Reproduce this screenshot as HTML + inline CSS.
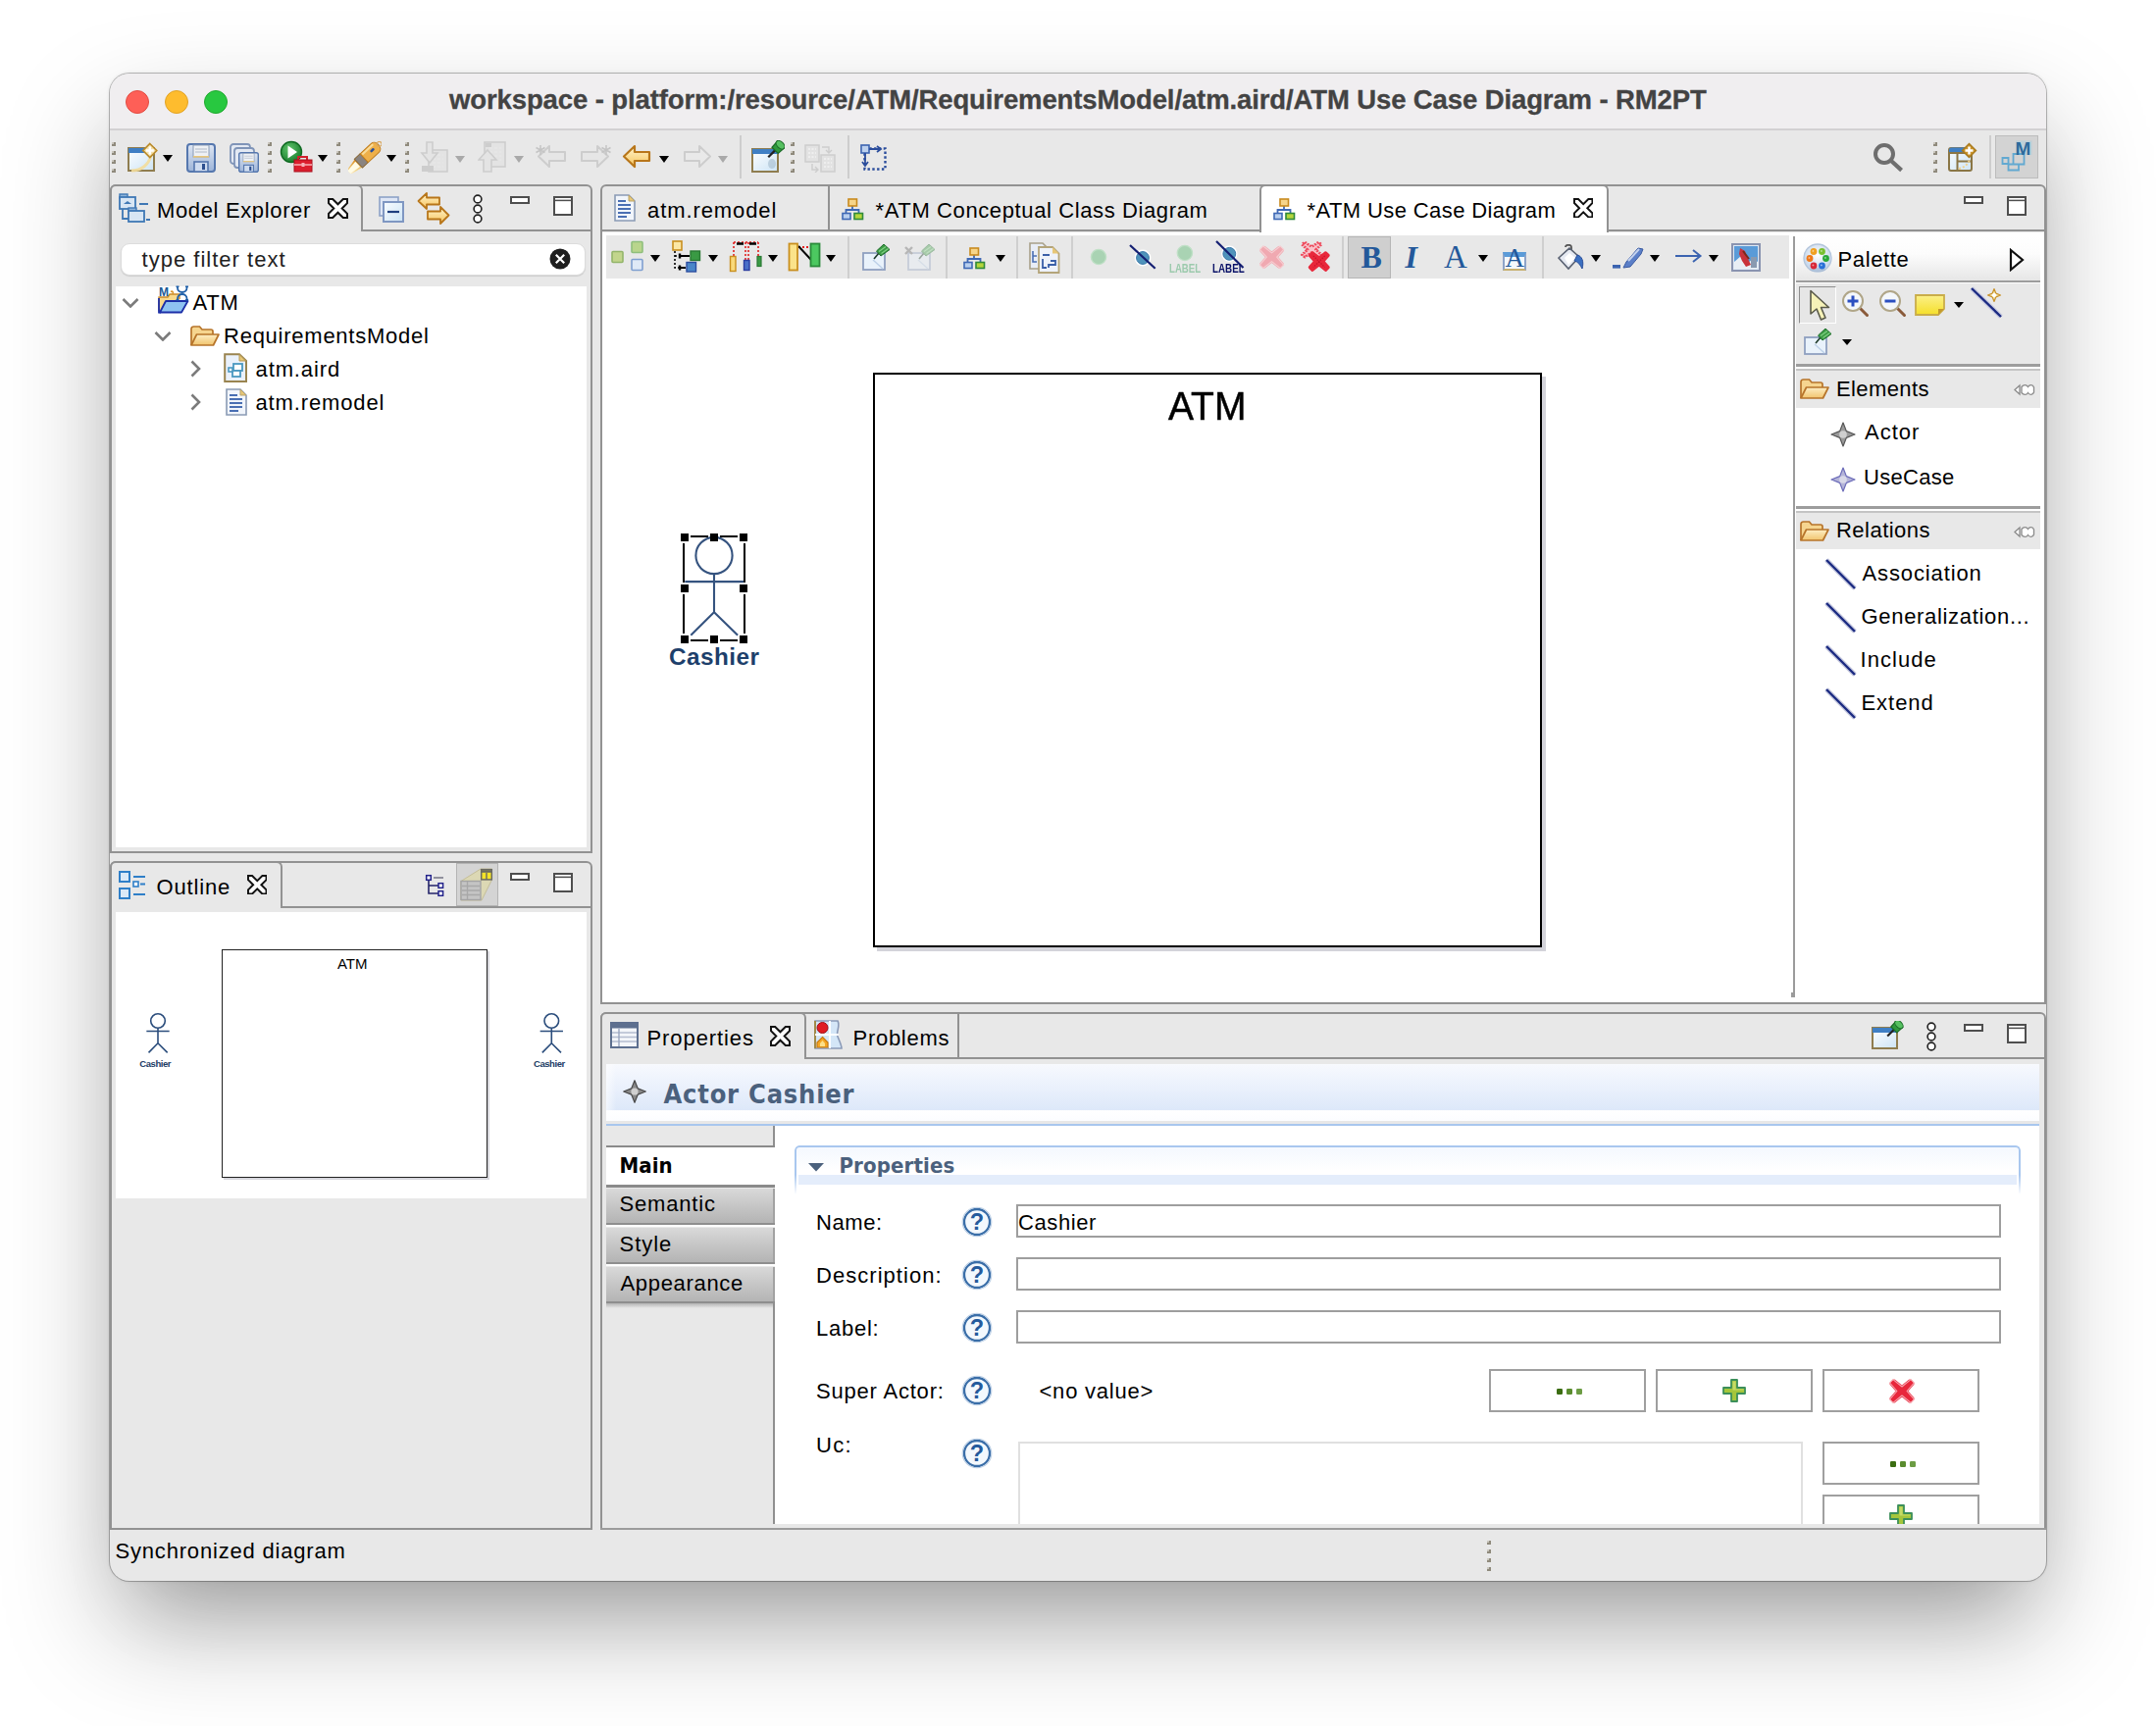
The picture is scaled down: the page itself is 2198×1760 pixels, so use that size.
<!DOCTYPE html>
<html><head><meta charset="utf-8"><title>RM2PT</title>
<style>
html,body{margin:0;padding:0;}
body{width:2198px;height:1760px;position:relative;overflow:hidden;background:#fff;font-family:"Liberation Sans",sans-serif;}
body div, body svg, body span.t{position:absolute;box-sizing:border-box;}
span.t{white-space:pre;}

</style></head><body>
<div style="left:112px;top:75px;width:1974px;height:1537px;background:#e8e8e8;border-radius:20px;box-shadow:0 0 0 1px rgba(0,0,0,0.25),0 50px 110px rgba(0,0,0,0.27),0 50px 80px -40px rgba(0,0,0,0.2),0 0 4px rgba(0,0,0,0.1);"></div>
<div style="left:112px;top:75px;width:1974px;height:58px;background:#f0eef0;border-radius:20px 20px 0 0;border-bottom:2px solid #d2d0d2;"></div>
<div style="left:128px;top:92px;width:24px;height:24px;background:#fe5f57;border-radius:50%;border:1px solid #e24b41;"></div>
<div style="left:168px;top:92px;width:24px;height:24px;background:#febc2e;border-radius:50%;border:1px solid #e1a325;"></div>
<div style="left:208px;top:92px;width:24px;height:24px;background:#28c840;border-radius:50%;border:1px solid #1fa92e;"></div>
<span class="t" style="left:458.00px;top:88px;font:700 27.5px/1 'Liberation Sans', sans-serif;color:#434343;letter-spacing:-0.112px;-webkit-text-stroke:0.3px #434343;">workspace - platform:/resource/ATM/RequirementsModel/atm.aird/ATM Use Case Diagram - RM2PT</span>
<div style="left:112px;top:188px;width:492px;height:682px;border:2px solid #929292;border-radius:6px 6px 0 0;background:#e8e8e8;"></div>
<div style="left:368px;top:234px;width:234px;height:2px;background:#929292"></div>
<div style="left:112px;top:188px;width:258px;height:48px;border:2px solid #929292;border-bottom:none;border-radius:6px 6px 0 0;background:#e8e8e8;"></div>
<div style="left:123px;top:247.5px;width:474px;height:33px;background:#fff;border-radius:9px;border:1px solid #dcdcdc;box-shadow:0 1px 1px rgba(0,0,0,0.12);"></div>
<div style="left:118px;top:292px;width:480px;height:572px;background:#fff;"></div>
<div style="left:112px;top:878px;width:492px;height:682px;border:2px solid #929292;border-radius:6px 6px 0 0;background:#e8e8e8;"></div>
<div style="left:286px;top:924px;width:316px;height:2px;background:#929292"></div>
<div style="left:112px;top:878px;width:176px;height:48px;border:2px solid #929292;border-bottom:none;border-radius:6px 6px 0 0;background:#e8e8e8;"></div>
<div style="left:118px;top:930px;width:480px;height:292px;background:#fff;"></div>
<div style="left:612px;top:188px;width:1474px;height:836px;border:2px solid #929292;border-radius:6px 6px 0 0;background:#e8e8e8;"></div>
<div style="left:614px;top:237px;width:1470px;height:785px;background:#fff;"></div>
<div style="left:614px;top:234px;width:671px;height:2px;background:#929292"></div>
<div style="left:1638px;top:234px;width:446px;height:2px;background:#929292"></div>
<div style="left:844px;top:190px;width:2px;height:44px;background:#929292"></div>
<div style="left:1284px;top:188px;width:356px;height:49px;border:2px solid #929292;border-bottom:none;border-radius:6px 6px 0 0;background:#fff;"></div>
<div style="left:612px;top:1032px;width:1474px;height:528px;border:2px solid #929292;border-radius:6px 6px 0 0;background:#e8e8e8;"></div>
<div style="left:820px;top:1078px;width:1264px;height:2px;background:#929292"></div>
<div style="left:612px;top:1032px;width:210px;height:48px;border:2px solid #929292;border-bottom:none;border-radius:6px 6px 0 0;background:#e8e8e8;"></div>
<div style="left:976px;top:1034px;width:2px;height:44px;background:#929292"></div>
<div style="left:618px;top:240px;width:1206px;height:43.6px;background:#e8e8e8;"></div>
<div style="left:1828px;top:241px;width:2px;height:776px;background:#9b9b9b"></div>
<div style="left:1826px;top:1012px;width:3px;height:5px;background:#9b9b9b;"></div>
<div style="left:1831px;top:241px;width:249px;height:45px;background:linear-gradient(180deg,#fff 0%,#fcfcfc 40%,#e6e6e6 100%);"></div>
<div style="left:1831px;top:286px;width:249px;height:2px;background:#9d9d9d"></div>
<div style="left:1831px;top:289px;width:249px;height:82px;background:#e8e8e8;"></div>
<div style="left:1831px;top:371px;width:249px;height:2.6px;background:#9d9d9d"></div>
<div style="left:1831px;top:376px;width:249px;height:2px;background:#c4c4c4"></div>
<div style="left:1831px;top:378px;width:249px;height:38px;background:#e8e8e8;"></div>
<div style="left:1831px;top:516px;width:249px;height:2.6px;background:#9d9d9d"></div>
<div style="left:1831px;top:521px;width:249px;height:2px;background:#c4c4c4"></div>
<div style="left:1831px;top:523px;width:249px;height:37px;background:#e8e8e8;"></div>
<div style="left:1834px;top:292px;width:38px;height:37.6px;border:1.6px solid #8e8e8e;border-right-color:#fff;border-bottom-color:#fff;background:#e6e6e6;"></div>
<div style="left:894px;top:384px;width:682px;height:586px;background:#d3d3da;"></div>
<div style="left:890px;top:380px;width:682px;height:586px;background:#fff;border:2px solid #000;"></div>
<span class="t" style="left:1191.00px;top:393px;font:400 41.5px/1 'Liberation Sans', sans-serif;color:#000;transform:scaleX(0.9396);transform-origin:0 0;-webkit-text-stroke:0.5px #000;">ATM</span>
<svg style="left:690px;top:540px;" width="76" height="120" viewBox="0 0 76 120"><path d="M14 7H32M14 113H32M44 7H62M44 113H62M7 14V54M69 14V54M7 66V106M69 66V106" stroke="#000" stroke-width="2" fill="none"/><g fill="none" stroke="#35537f" stroke-width="2.1"><circle cx="38" cy="26.5" r="18.6"/><path d="M38 45V84.8M8.3 53.1H68.1M38 84.2L14.3 107.8M38 84.2L62.1 107.8"/></g><rect x="4" y="4" width="8" height="8" fill="#000"/><rect x="4" y="56" width="8" height="8" fill="#000"/><rect x="4" y="108" width="8" height="8" fill="#000"/><rect x="34" y="4" width="8" height="8" fill="#000"/><rect x="34" y="108" width="8" height="8" fill="#000"/><rect x="64" y="4" width="8" height="8" fill="#000"/><rect x="64" y="56" width="8" height="8" fill="#000"/><rect x="64" y="108" width="8" height="8" fill="#000"/></svg>
<span class="t" style="left:682.00px;top:658px;font:700 24.3px/1 'Liberation Sans', sans-serif;color:#1d3f6b;letter-spacing:0.454px;">Cashier</span>
<div style="left:228px;top:970px;width:271px;height:233px;background:#d6d6dc;"></div>
<div style="left:226px;top:968px;width:271px;height:233px;background:#fff;border:1px solid #222;"></div>
<span class="t" style="left:344.00px;top:975px;font:400 15px/1 'Liberation Sans', sans-serif;color:#000;letter-spacing:-0.027px;">ATM</span>
<svg style="left:140px;top:1025px;" width="50" height="55" viewBox="0 0 50 55"><g fill="none" stroke="#2b4d7c" stroke-width="1.6" stroke-linecap="butt"><circle cx="21" cy="16.005000000000003" r="7.3075"/><path d="M21 23.3125V38.915000000000006M9.3475 26.4725H32.6525M21 38.7175L11.52 48.395M21 38.7175L30.677500000000002 48.395"/></g></svg>
<svg style="left:541px;top:1025px;" width="50" height="55" viewBox="0 0 50 55"><g fill="none" stroke="#2b4d7c" stroke-width="1.6" stroke-linecap="butt"><circle cx="21.3" cy="16.005000000000003" r="7.3075"/><path d="M21.3 23.3125V38.915000000000006M9.6475 26.4725H32.9525M21.3 38.7175L11.82 48.395M21.3 38.7175L30.9775 48.395"/></g></svg>
<span class="t" style="left:142.30px;top:1080px;font:700 9.5px/1 'Liberation Sans', sans-serif;color:#1d3d66;letter-spacing:-0.442px;">Cashier</span>
<span class="t" style="left:544.00px;top:1080px;font:700 9.5px/1 'Liberation Sans', sans-serif;color:#1d3d66;letter-spacing:-0.442px;">Cashier</span>
<div style="left:618px;top:1085px;width:1461px;height:58px;background:linear-gradient(180deg,#f7f9fe 0%,#e9f0fc 45%,#dde8f9 81%,#fff 82%,#fcfdff 100%);"></div>
<div style="left:618px;top:1085px;width:10px;height:58px;background:linear-gradient(90deg,rgba(255,255,255,.6),rgba(255,255,255,0));"></div>
<div style="left:618px;top:1146px;width:1461px;height:2px;background:#a8c6ee"></div>
<span class="t" style="left:676.50px;top:1102px;font:700 27px/1 'DejaVu Sans Condensed', 'DejaVu Sans', sans-serif;color:#4b617d;letter-spacing:0.775px;">Actor Cashier</span>
<div style="left:618px;top:1148px;width:1461px;height:406px;background:#fff;"></div>
<div style="left:618px;top:1148px;width:172px;height:406px;background:#e8e8e8;"></div>
<div style="left:788px;top:1148px;width:2px;height:20px;background:#8f8f8f"></div>
<div style="left:618px;top:1167.6px;width:172px;height:2.4px;background:#8a8a8a"></div>
<div style="left:618px;top:1170px;width:172px;height:38px;background:#fff;"></div>
<div style="left:618px;top:1208px;width:172px;height:2.6px;background:#8a8a8a"></div>
<span class="t" style="left:631.50px;top:1178px;font:700 22px/1 'DejaVu Sans Condensed', 'DejaVu Sans', sans-serif;color:#000;letter-spacing:0.056px;">Main</span>
<div style="left:618px;top:1212px;width:172px;height:35px;background:linear-gradient(180deg,#d9d9d9 0%,#c6c6c6 50%,#b4b4b4 100%);border-right:2px solid #a2a2a2;"></div>
<div style="left:618px;top:1247px;width:172px;height:2px;background:#8e8e8e"></div>
<div style="left:618px;top:1249px;width:172px;height:2px;background:#fdfdfd"></div>
<span class="t" style="left:631.50px;top:1217px;font:400 22px/1 'Liberation Sans', sans-serif;color:#000;letter-spacing:0.828px;">Semantic</span>
<div style="left:618px;top:1252px;width:172px;height:35px;background:linear-gradient(180deg,#d9d9d9 0%,#c6c6c6 50%,#b4b4b4 100%);border-right:2px solid #a2a2a2;"></div>
<div style="left:618px;top:1287px;width:172px;height:2px;background:#8e8e8e"></div>
<div style="left:618px;top:1289px;width:172px;height:2px;background:#fdfdfd"></div>
<span class="t" style="left:631.50px;top:1258px;font:400 22px/1 'Liberation Sans', sans-serif;color:#000;letter-spacing:0.957px;">Style</span>
<div style="left:618px;top:1292px;width:172px;height:35px;background:linear-gradient(180deg,#d9d9d9 0%,#c6c6c6 50%,#b4b4b4 100%);border-right:2px solid #a2a2a2;"></div>
<div style="left:618px;top:1327px;width:172px;height:2px;background:#8e8e8e"></div>
<div style="left:618px;top:1329px;width:170px;height:5px;background:linear-gradient(180deg,#b4b4b4,#e8e8e8);"></div>
<span class="t" style="left:632.50px;top:1298px;font:400 22px/1 'Liberation Sans', sans-serif;color:#000;letter-spacing:0.676px;">Appearance</span>
<div style="left:788px;top:1329px;width:2px;height:225px;background:#8f8f8f"></div>
<div style="left:810px;top:1168px;width:1250px;height:50px;border:2px solid #a9c7ef;border-bottom:none;border-radius:5px 5px 0 0;background:linear-gradient(180deg,#f4f8fe 0%,#fff 50%,#fff 100%);-webkit-mask-image:linear-gradient(180deg,#000 60%,transparent 100%);"></div>
<div style="left:814px;top:1197.5px;width:1242px;height:10px;background:#e4edfb;"></div>
<svg style="left:824px;top:1185.8px;" width="16" height="9" viewBox="0 0 16 9"><path d="M0 0H16L8 8.6Z" fill="#4b617d"/></svg>
<span class="t" style="left:855.50px;top:1178px;font:700 22px/1 'DejaVu Sans Condensed', 'DejaVu Sans', sans-serif;color:#4b617d;letter-spacing:0.123px;">Properties</span>
<span class="t" style="left:832.00px;top:1236px;font:400 22px/1 'Liberation Sans', sans-serif;color:#000;letter-spacing:0.579px;">Name:</span>
<svg style="left:979.5px;top:1230px;" width="32" height="32" viewBox="0 0 32 32"><circle cx="16" cy="16" r="13" fill="#f3f8fd" stroke="#3a6ea8" stroke-width="2.3"/><circle cx="16" cy="16" r="14.8" fill="none" stroke="#b9cde4" stroke-width="1.1"/><text x="16" y="24.4" text-anchor="middle" font-family="Liberation Sans, sans-serif" font-weight="700" font-size="23.5" fill="#245a9c">?</text></svg>
<div style="left:1036px;top:1228px;width:1004px;height:34px;background:#fff;border:2px solid #9e9e9e;"></div>
<span class="t" style="left:832.00px;top:1290px;font:400 22px/1 'Liberation Sans', sans-serif;color:#000;letter-spacing:1.042px;">Description:</span>
<svg style="left:979.5px;top:1284px;" width="32" height="32" viewBox="0 0 32 32"><circle cx="16" cy="16" r="13" fill="#f3f8fd" stroke="#3a6ea8" stroke-width="2.3"/><circle cx="16" cy="16" r="14.8" fill="none" stroke="#b9cde4" stroke-width="1.1"/><text x="16" y="24.4" text-anchor="middle" font-family="Liberation Sans, sans-serif" font-weight="700" font-size="23.5" fill="#245a9c">?</text></svg>
<div style="left:1036px;top:1282px;width:1004px;height:34px;background:#fff;border:2px solid #9e9e9e;"></div>
<span class="t" style="left:832.00px;top:1344px;font:400 22px/1 'Liberation Sans', sans-serif;color:#000;letter-spacing:0.734px;">Label:</span>
<svg style="left:979.5px;top:1338px;" width="32" height="32" viewBox="0 0 32 32"><circle cx="16" cy="16" r="13" fill="#f3f8fd" stroke="#3a6ea8" stroke-width="2.3"/><circle cx="16" cy="16" r="14.8" fill="none" stroke="#b9cde4" stroke-width="1.1"/><text x="16" y="24.4" text-anchor="middle" font-family="Liberation Sans, sans-serif" font-weight="700" font-size="23.5" fill="#245a9c">?</text></svg>
<div style="left:1036px;top:1336px;width:1004px;height:34px;background:#fff;border:2px solid #9e9e9e;"></div>
<span class="t" style="left:1038.00px;top:1236px;font:400 22px/1 'Liberation Sans', sans-serif;color:#000;letter-spacing:0.586px;">Cashier</span>
<span class="t" style="left:832.00px;top:1408px;font:400 22px/1 'Liberation Sans', sans-serif;color:#000;letter-spacing:0.803px;">Super Actor:</span>
<svg style="left:979.5px;top:1402px;" width="32" height="32" viewBox="0 0 32 32"><circle cx="16" cy="16" r="13" fill="#f3f8fd" stroke="#3a6ea8" stroke-width="2.3"/><circle cx="16" cy="16" r="14.8" fill="none" stroke="#b9cde4" stroke-width="1.1"/><text x="16" y="24.4" text-anchor="middle" font-family="Liberation Sans, sans-serif" font-weight="700" font-size="23.5" fill="#245a9c">?</text></svg>
<span class="t" style="left:1059.50px;top:1408px;font:400 22px/1 'Liberation Sans', sans-serif;color:#000;letter-spacing:0.775px;">&lt;no value&gt;</span>
<div style="left:1518px;top:1396px;width:160px;height:44px;background:#fff;border:2px solid #9f9f9f;"></div>
<svg style="left:1583.5px;top:1416.0px;" width="32" height="6" viewBox="0 0 32 6"><rect x="3" y="0" width="6" height="6" rx="1.2" fill="#3b6d12"/><rect x="13" y="0" width="6" height="6" rx="1.2" fill="#5a8c2e"/><rect x="23" y="0" width="6" height="6" rx="1.2" fill="#6c9c44"/></svg>
<div style="left:1688px;top:1396px;width:160px;height:44px;background:#fff;border:2px solid #9f9f9f;"></div>
<svg style="left:1756.0px;top:1405.5px;" width="24" height="24" viewBox="0 0 24 24"><path d="M9 1H15V9H23V15H15V23H9V15H1V9H9Z" fill="#a5c63b" stroke="#3c8f5a" stroke-width="1.8" stroke-linejoin="round"/><path d="M10.5 2.5H13.5V10.5H21.5V11.5H10.5Z" fill="#d2e47a" opacity=".7"/></svg>
<div style="left:1858px;top:1396px;width:160px;height:44px;background:#fff;border:2px solid #9f9f9f;"></div>
<svg style="left:1926.0px;top:1405.5px;" width="26" height="25" viewBox="0 0 26 25"><path d="M5 2 L13 8.5 L21 2 L24 5 L17.5 12.5 L24 20 L21 23 L13 16.5 L5 23 L2 20 L8.5 12.5 L2 5Z" fill="#e8283c" stroke="#e8283c" stroke-width="3" stroke-linejoin="round"/><path d="M5 2 L13 8.5 L21 2 L24 5 L17.5 12.5 L24 20 L21 23 L13 16.5 L5 23 L2 20 L8.5 12.5 L2 5Z" fill="none" stroke="#f6a6ae" stroke-width="1" stroke-linejoin="round" transform="translate(13 12.5) scale(1.13) translate(-13 -12.5)"/></svg>
<span class="t" style="left:832.00px;top:1463px;font:400 22px/1 'Liberation Sans', sans-serif;color:#000;letter-spacing:1.306px;">Uc:</span>
<svg style="left:979.5px;top:1466px;" width="32" height="32" viewBox="0 0 32 32"><circle cx="16" cy="16" r="13" fill="#f3f8fd" stroke="#3a6ea8" stroke-width="2.3"/><circle cx="16" cy="16" r="14.8" fill="none" stroke="#b9cde4" stroke-width="1.1"/><text x="16" y="24.4" text-anchor="middle" font-family="Liberation Sans, sans-serif" font-weight="700" font-size="23.5" fill="#245a9c">?</text></svg>
<div style="left:1038px;top:1470px;width:800px;height:84px;background:#fff;border:2px solid #e0e0e0;border-bottom:none;"></div>
<div style="left:1858px;top:1470px;width:160px;height:44px;background:#fff;border:2px solid #9f9f9f;"></div>
<svg style="left:1923.5px;top:1490.0px;" width="32" height="6" viewBox="0 0 32 6"><rect x="3" y="0" width="6" height="6" rx="1.2" fill="#3b6d12"/><rect x="13" y="0" width="6" height="6" rx="1.2" fill="#5a8c2e"/><rect x="23" y="0" width="6" height="6" rx="1.2" fill="#6c9c44"/></svg>
<div style="left:1858px;top:1524px;width:160px;height:30px;background:#fff;border:2px solid #9f9f9f;border-bottom:none;"></div>
<svg style="left:1926.0px;top:1533.5px;" width="24" height="24" viewBox="0 0 24 24"><path d="M9 1H15V9H23V15H15V23H9V15H1V9H9Z" fill="#a5c63b" stroke="#3c8f5a" stroke-width="1.8" stroke-linejoin="round"/><path d="M10.5 2.5H13.5V10.5H21.5V11.5H10.5Z" fill="#d2e47a" opacity=".7"/></svg>
<div style="left:614px;top:1554px;width:1470px;height:4px;background:#e8e8e8;"></div>
<div style="left:612px;top:1558px;width:1474px;height:2px;background:#9b9b9b"></div>
<span class="t" style="left:160.00px;top:204px;font:400 22px/1 'Liberation Sans', sans-serif;color:#000;letter-spacing:0.644px;">Model Explorer</span>
<span class="t" style="left:144.50px;top:254px;font:400 22px/1 'Liberation Sans', sans-serif;color:#222;letter-spacing:1.019px;">type filter text</span>
<span class="t" style="left:196.50px;top:298px;font:400 22px/1 'Liberation Sans', sans-serif;color:#000;letter-spacing:0.760px;">ATM</span>
<span class="t" style="left:228.00px;top:332px;font:400 22px/1 'Liberation Sans', sans-serif;color:#000;letter-spacing:0.751px;">RequirementsModel</span>
<span class="t" style="left:260.50px;top:366px;font:400 22px/1 'Liberation Sans', sans-serif;color:#000;letter-spacing:0.895px;">atm.aird</span>
<span class="t" style="left:260.50px;top:400px;font:400 22px/1 'Liberation Sans', sans-serif;color:#000;letter-spacing:0.862px;">atm.remodel</span>
<span class="t" style="left:159.50px;top:894px;font:400 22px/1 'Liberation Sans', sans-serif;color:#000;letter-spacing:0.838px;">Outline</span>
<span class="t" style="left:660.00px;top:204px;font:400 22px/1 'Liberation Sans', sans-serif;color:#000;letter-spacing:0.912px;">atm.remodel</span>
<span class="t" style="left:892.50px;top:204px;font:400 22px/1 'Liberation Sans', sans-serif;color:#000;letter-spacing:0.613px;">*ATM Conceptual Class Diagram</span>
<span class="t" style="left:1332.50px;top:204px;font:400 22px/1 'Liberation Sans', sans-serif;color:#000;letter-spacing:0.400px;">*ATM Use Case Diagram</span>
<span class="t" style="left:1873.50px;top:254px;font:400 22px/1 'Liberation Sans', sans-serif;color:#000;letter-spacing:0.624px;">Palette</span>
<span class="t" style="left:1872.00px;top:386px;font:400 22px/1 'Liberation Sans', sans-serif;color:#000;letter-spacing:0.399px;">Elements</span>
<span class="t" style="left:1901.00px;top:430px;font:400 22px/1 'Liberation Sans', sans-serif;color:#000;letter-spacing:0.995px;">Actor</span>
<span class="t" style="left:1900.00px;top:476px;font:400 22px/1 'Liberation Sans', sans-serif;color:#000;letter-spacing:0.292px;">UseCase</span>
<span class="t" style="left:1872.00px;top:530px;font:400 22px/1 'Liberation Sans', sans-serif;color:#000;letter-spacing:0.473px;">Relations</span>
<span class="t" style="left:1898.50px;top:574px;font:400 22px/1 'Liberation Sans', sans-serif;color:#000;letter-spacing:0.873px;">Association</span>
<span class="t" style="left:1897.50px;top:618px;font:400 22px/1 'Liberation Sans', sans-serif;color:#000;letter-spacing:0.682px;">Generalization...</span>
<span class="t" style="left:1896.50px;top:662px;font:400 22px/1 'Liberation Sans', sans-serif;color:#000;letter-spacing:1.049px;">Include</span>
<span class="t" style="left:1897.50px;top:706px;font:400 22px/1 'Liberation Sans', sans-serif;color:#000;letter-spacing:0.949px;">Extend</span>
<span class="t" style="left:659.50px;top:1048px;font:400 22px/1 'Liberation Sans', sans-serif;color:#000;letter-spacing:0.915px;">Properties</span>
<span class="t" style="left:869.50px;top:1048px;font:400 22px/1 'Liberation Sans', sans-serif;color:#000;letter-spacing:0.726px;">Problems</span>
<span class="t" style="left:117.50px;top:1571px;font:400 22px/1 'Liberation Sans', sans-serif;color:#000;letter-spacing:0.812px;">Synchronized diagram</span>
<svg width="0" height="0" style="left:0;top:0"><defs><linearGradient id="gw" x1="0" y1="0" x2="1" y2="1"><stop offset="0" stop-color="#f7fbfe"/><stop offset="1" stop-color="#cfe5f5"/></linearGradient><linearGradient id="gsave" x1="0" y1="0" x2="0" y2="1"><stop offset="0" stop-color="#dfe7f3"/><stop offset="1" stop-color="#9db4d8"/></linearGradient><linearGradient id="gyel" x1="0" y1="0" x2="0" y2="1"><stop offset="0" stop-color="#fff6d0"/><stop offset="1" stop-color="#f7c35a"/></linearGradient><radialGradient id="ggreen" cx=".4" cy=".35" r=".7"><stop offset="0" stop-color="#5fc46a"/><stop offset="1" stop-color="#157a2b"/></radialGradient><linearGradient id="gpen" x1="0" y1="1" x2="1" y2="0"><stop offset="0" stop-color="#fff"/><stop offset=".35" stop-color="#f3d488"/><stop offset="1" stop-color="#d98a1c"/></linearGradient><linearGradient id="gfold" x1="0" y1="0" x2="0" y2="1"><stop offset="0" stop-color="#fdeec4"/><stop offset="1" stop-color="#f1c46d"/></linearGradient><linearGradient id="gnote" x1="0" y1="0" x2="0" y2="1"><stop offset="0" stop-color="#fbf08a"/><stop offset="1" stop-color="#f5df28"/></linearGradient><radialGradient id="gpal" cx=".5" cy=".4" r=".6"><stop offset="0" stop-color="#fff"/><stop offset="1" stop-color="#bfd2e8"/></radialGradient></defs></svg>
<svg style="left:114px;top:144.6px;" width="4" height="36" viewBox="0 0 4 36"><rect x="0" y="0" width="4" height="4" fill="#8f8a7c"/><rect x="0" y="0" width="2" height="2" fill="#c9c6bd"/><rect x="0" y="9" width="4" height="4" fill="#8f8a7c"/><rect x="0" y="9" width="2" height="2" fill="#c9c6bd"/><rect x="0" y="18" width="4" height="4" fill="#8f8a7c"/><rect x="0" y="18" width="2" height="2" fill="#c9c6bd"/><rect x="0" y="27" width="4" height="4" fill="#8f8a7c"/><rect x="0" y="27" width="2" height="2" fill="#c9c6bd"/></svg>
<svg style="left:130px;top:144px;" width="32" height="32" viewBox="0 0 32 32"><rect x="1" y="7" width="26" height="23" fill="#eaf4fb" stroke="#8f7d4f" stroke-width="2"/><rect x="1" y="7" width="26" height="5" fill="#3f7fc4"/><rect x="2" y="12" width="24" height="17" fill="url(#gw)"/><path d="M4 30 C14 30 22 24 24 14" fill="none" stroke="#f3dd9a" stroke-width="3" opacity=".9"/><path d="M22.8 2.5 L29.8 9.5 L22.8 16.5 L15.8 9.5Z" fill="#f3dfa6" stroke="#b98a2a" stroke-width="1.6"/><path d="M22.8 5.5V13.5M18.8 9.5H26.8" stroke="#fff" stroke-width="2.4"/></svg>
<svg style="left:166px;top:158px;" width="10" height="7" viewBox="0 0 10 7"><path d="M0 0H10L5.0 7Z" fill="#000"/></svg>
<svg style="left:190px;top:146px;" width="30" height="30" viewBox="0 0 30 30"><g transform="translate(0,0) scale(1.0)"><rect x="1" y="1" width="28" height="28" rx="3" fill="url(#gsave)" stroke="#5577ae" stroke-width="2"/><rect x="7" y="2" width="16" height="12" fill="#eef1f5" stroke="#8a9bb5" stroke-width="1"/><path d="M9 6H21M9 9H21" stroke="#c5cbd6" stroke-width="1.4"/><rect x="7" y="13" width="16" height="1.6" fill="#e8c77c"/><rect x="8" y="19" width="14" height="10" fill="#cfdcf0" stroke="#5577ae" stroke-width="1.6"/><rect x="16" y="21" width="3" height="6" fill="#2d4f8f"/></g></svg>
<svg style="left:234px;top:146px;" width="31" height="30" viewBox="0 0 31 30"><rect x="1" y="1" width="20" height="20" rx="3" fill="#e3e9f3" stroke="#7f94b8" stroke-width="1.8"/><rect x="5" y="5" width="20" height="20" rx="3" fill="#e3e9f3" stroke="#7f94b8" stroke-width="1.8"/><g transform="translate(9,9) scale(0.7)"><rect x="1" y="1" width="28" height="28" rx="3" fill="url(#gsave)" stroke="#5577ae" stroke-width="2"/><rect x="7" y="2" width="16" height="12" fill="#eef1f5" stroke="#8a9bb5" stroke-width="1"/><path d="M9 6H21M9 9H21" stroke="#c5cbd6" stroke-width="1.4"/><rect x="7" y="13" width="16" height="1.6" fill="#e8c77c"/><rect x="8" y="19" width="14" height="10" fill="#cfdcf0" stroke="#5577ae" stroke-width="1.6"/><rect x="16" y="21" width="3" height="6" fill="#2d4f8f"/></g></svg>
<svg style="left:273px;top:144.6px;" width="4" height="36" viewBox="0 0 4 36"><rect x="0" y="0" width="4" height="4" fill="#8f8a7c"/><rect x="0" y="0" width="2" height="2" fill="#c9c6bd"/><rect x="0" y="9" width="4" height="4" fill="#8f8a7c"/><rect x="0" y="9" width="2" height="2" fill="#c9c6bd"/><rect x="0" y="18" width="4" height="4" fill="#8f8a7c"/><rect x="0" y="18" width="2" height="2" fill="#c9c6bd"/><rect x="0" y="27" width="4" height="4" fill="#8f8a7c"/><rect x="0" y="27" width="2" height="2" fill="#c9c6bd"/></svg>
<svg style="left:285px;top:143px;" width="34" height="33" viewBox="0 0 34 33"><circle cx="12" cy="12" r="10.5" fill="url(#ggreen)" stroke="#0f6a22" stroke-width="1.4"/><path d="M8.5 5.5L18 12L8.5 18.5Z" fill="#fff"/><rect x="19" y="17" width="9" height="5" fill="none" stroke="#d0202c" stroke-width="2"/><rect x="15" y="20" width="18" height="12" fill="#dc1f2e" stroke="#a80f1c" stroke-width="1"/><path d="M15 25H33" stroke="#f7b0b5" stroke-width="1.5"/><rect x="22.5" y="23" width="3" height="4" fill="#f7b0b5"/></svg>
<svg style="left:324px;top:158px;" width="10" height="7" viewBox="0 0 10 7"><path d="M0 0H10L5.0 7Z" fill="#000"/></svg>
<svg style="left:343px;top:144.6px;" width="4" height="36" viewBox="0 0 4 36"><rect x="0" y="0" width="4" height="4" fill="#8f8a7c"/><rect x="0" y="0" width="2" height="2" fill="#c9c6bd"/><rect x="0" y="9" width="4" height="4" fill="#8f8a7c"/><rect x="0" y="9" width="2" height="2" fill="#c9c6bd"/><rect x="0" y="18" width="4" height="4" fill="#8f8a7c"/><rect x="0" y="18" width="2" height="2" fill="#c9c6bd"/><rect x="0" y="27" width="4" height="4" fill="#8f8a7c"/><rect x="0" y="27" width="2" height="2" fill="#c9c6bd"/></svg>
<svg style="left:355px;top:144px;" width="34" height="33" viewBox="0 0 34 33"><g transform="rotate(-43 17 16.5)"><path d="M-5 13.5L8 11V22L-5 19.5Z" fill="url(#gpen)"/><path d="M-5 14.5L7 13V20L-5 18.5Z" fill="#fffbe6"/><rect x="8" y="10.5" width="8" height="12" fill="#8a8480" stroke="#8a6a3a" stroke-width="1"/><path d="M16 10.5H31C34 10.5 36 13 36 16.5C36 20 34 22.5 31 22.5H16Z" fill="#eeb04a" stroke="#c07d1d" stroke-width="1"/><path d="M17 12.5H32" stroke="#f9dc9a" stroke-width="2"/><rect x="25" y="15" width="5" height="2.6" rx="1.2" fill="#2a4f9a"/><circle cx="37" cy="16.5" r="2.4" fill="none" stroke="#d9a860" stroke-width="1.2"/></g></svg>
<svg style="left:394px;top:158px;" width="10" height="7" viewBox="0 0 10 7"><path d="M0 0H10L5.0 7Z" fill="#000"/></svg>
<svg style="left:413px;top:144.6px;" width="4" height="36" viewBox="0 0 4 36"><rect x="0" y="0" width="4" height="4" fill="#8f8a7c"/><rect x="0" y="0" width="2" height="2" fill="#c9c6bd"/><rect x="0" y="9" width="4" height="4" fill="#8f8a7c"/><rect x="0" y="9" width="2" height="2" fill="#c9c6bd"/><rect x="0" y="18" width="4" height="4" fill="#8f8a7c"/><rect x="0" y="18" width="2" height="2" fill="#c9c6bd"/><rect x="0" y="27" width="4" height="4" fill="#8f8a7c"/><rect x="0" y="27" width="2" height="2" fill="#c9c6bd"/></svg>
<svg style="left:428px;top:144px;" width="29" height="32" viewBox="0 0 29 32"><rect x="9" y="9" width="19" height="22" fill="#e3e3e3" stroke="#cdcdcd" stroke-width="1.6"/><path d="M13 14H24M13 18H24M13 22H24M13 26H24" stroke="#e8e8e8" stroke-width="1.6" stroke-dasharray="3 2"/><path d="M7 1H13V12H18L10 22L2 12H7Z" fill="#e4e4e4" stroke="#cdcdcd" stroke-width="1.6"/><rect x="2" y="25" width="12" height="6" fill="#cdcdcd"/></svg>
<svg style="left:464px;top:159px;" width="10" height="7" viewBox="0 0 10 7"><path d="M0 0H10L5.0 7Z" fill="#a9a9a9"/></svg>
<svg style="left:487px;top:144px;" width="30" height="32" viewBox="0 0 30 32"><rect x="7" y="1" width="21" height="25" fill="#e3e3e3" stroke="#cdcdcd" stroke-width="1.6"/><path d="M12 7H24M12 11H24M12 15H24M12 19H24" stroke="#e8e8e8" stroke-width="1.6" stroke-dasharray="3 2"/><rect x="8" y="2" width="6" height="4" fill="#cdcdcd"/><path d="M10 9L19 19H14V31H6V19H1Z" fill="#e4e4e4" stroke="#cdcdcd" stroke-width="1.6"/></svg>
<svg style="left:524px;top:159px;" width="10" height="7" viewBox="0 0 10 7"><path d="M0 0H10L5.0 7Z" fill="#a9a9a9"/></svg>
<svg style="left:546px;top:147px;" width="33" height="26" viewBox="0 0 33 26"><path d="M14 2L3 12.5L14 23V17H30V8H14Z" fill="#e6e6e6" stroke="#cdcdcd" stroke-width="2" stroke-linejoin="round"/><path d="M5 1V11M0.5 3.5L9.5 8.5M9.5 3.5L0.5 8.5" stroke="#c4c4c4" stroke-width="1.5"/></svg>
<svg style="left:590px;top:147px;" width="33" height="26" viewBox="0 0 33 26"><path d="M19 2L30 12.5L19 23V17H3V8H19Z" fill="#e6e6e6" stroke="#cdcdcd" stroke-width="2" stroke-linejoin="round"/><path d="M28 1V11M23.5 3.5L32.5 8.5M32.5 3.5L23.5 8.5" stroke="#c4c4c4" stroke-width="1.5"/></svg>
<svg style="left:634px;top:147px;" width="31" height="26" viewBox="0 0 31 26"><path d="M13 2L2 12.5L13 23V17H28V8H13Z" fill="url(#gyel)" stroke="#b8761a" stroke-width="2.2" stroke-linejoin="round"/></svg>
<svg style="left:672px;top:159px;" width="10" height="7" viewBox="0 0 10 7"><path d="M0 0H10L5.0 7Z" fill="#000"/></svg>
<svg style="left:695px;top:147px;" width="31" height="26" viewBox="0 0 31 26"><path d="M18 2L29 12.5L18 23V17H3V8H18Z" fill="#e9e9e9" stroke="#cdcdcd" stroke-width="2" stroke-linejoin="round"/></svg>
<svg style="left:732px;top:159px;" width="10" height="7" viewBox="0 0 10 7"><path d="M0 0H10L5.0 7Z" fill="#a9a9a9"/></svg>
<div style="left:754px;top:138px;width:2px;height:44px;background:#cdcdcd;"></div>
<svg style="left:766px;top:143px;" width="34" height="33" viewBox="0 0 34 33"><rect x="1" y="9" width="26" height="23" fill="#eaf4fb" stroke="#8f7d4f" stroke-width="2"/><rect x="1" y="9" width="26" height="5" fill="#3f7fc4"/><rect x="2" y="14" width="24" height="17" fill="url(#gw)"/><ellipse cx="21" cy="24" rx="4" ry="5" fill="#9fb7c9" opacity=".55"/><g transform="translate(16,1) scale(1.25)"><path d="M6.5 7.5L1 13" stroke="#222" stroke-width="1.8"/><path d="M4 5L9 10L14 5.5L8.5 0Z" fill="#2f9a3d" stroke="#1c6b28" stroke-width="1"/><ellipse cx="10.8" cy="3" rx="4.2" ry="2.6" transform="rotate(45 10.8 3)" fill="#55c060" stroke="#1c6b28" stroke-width=".8"/></g></svg>
<svg style="left:806px;top:144.6px;" width="4" height="36" viewBox="0 0 4 36"><rect x="0" y="0" width="4" height="4" fill="#8f8a7c"/><rect x="0" y="0" width="2" height="2" fill="#c9c6bd"/><rect x="0" y="9" width="4" height="4" fill="#8f8a7c"/><rect x="0" y="9" width="2" height="2" fill="#c9c6bd"/><rect x="0" y="18" width="4" height="4" fill="#8f8a7c"/><rect x="0" y="18" width="2" height="2" fill="#c9c6bd"/><rect x="0" y="27" width="4" height="4" fill="#8f8a7c"/><rect x="0" y="27" width="2" height="2" fill="#c9c6bd"/></svg>
<svg style="left:820px;top:147px;" width="32" height="29" viewBox="0 0 32 29"><rect x="1" y="1" width="14" height="17" fill="#e2e2e2" stroke="#cdcdcd" stroke-width="1.5"/><rect x="17" y="11" width="14" height="17" fill="#e2e2e2" stroke="#cdcdcd" stroke-width="1.5"/><path d="M4 5H12M4 9H12M4 13H12M20 15H28M20 19H28M20 23H28" stroke="#f2f2f2" stroke-width="1.6" stroke-dasharray="2 1.5"/><path d="M18 3H25V9M22 6L25 9L28 6M8 20V26H14M11 23L14 26L11 29" fill="none" stroke="#cdcdcd" stroke-width="1.4"/></svg>
<div style="left:864px;top:138px;width:2px;height:44px;background:#cdcdcd;"></div>
<svg style="left:877px;top:147px;" width="28" height="28" viewBox="0 0 28 28"><rect x="4.5" y="4.5" width="21" height="21" fill="none" stroke="#2b4d9c" stroke-width="2.4" stroke-dasharray="2.4 2.4"/><rect x="1" y="1" width="8" height="8" fill="#bcd0ee" stroke="#3b63b0" stroke-width="1.6"/><path d="M9 5H21M17 2L21 5L17 8M5 9V22M2 18L5 22L8 18" fill="none" stroke="#2b4d9c" stroke-width="1.8"/></svg>
<svg style="left:1909px;top:145px;" width="32" height="32" viewBox="0 0 32 32"><circle cx="12" cy="12" r="9" fill="none" stroke="#6e6e6e" stroke-width="4"/><path d="M18.5 18.5L29.6 28.6" stroke="#6e6e6e" stroke-width="4.2" stroke-linecap="butt"/></svg>
<svg style="left:1971px;top:144.6px;" width="4" height="36" viewBox="0 0 4 36"><rect x="0" y="0" width="4" height="4" fill="#8f8a7c"/><rect x="0" y="0" width="2" height="2" fill="#c9c6bd"/><rect x="0" y="9" width="4" height="4" fill="#8f8a7c"/><rect x="0" y="9" width="2" height="2" fill="#c9c6bd"/><rect x="0" y="18" width="4" height="4" fill="#8f8a7c"/><rect x="0" y="18" width="2" height="2" fill="#c9c6bd"/><rect x="0" y="27" width="4" height="4" fill="#8f8a7c"/><rect x="0" y="27" width="2" height="2" fill="#c9c6bd"/></svg>
<svg style="left:1985px;top:144px;" width="32" height="32" viewBox="0 0 32 32"><rect x="2" y="7" width="23" height="23" rx="2" fill="url(#gw)" stroke="#8a7646" stroke-width="2"/><path d="M2 12V9C2 7.5 3 6.5 4.5 6.5H22.5C24 6.5 25 7.5 25 9V12Z" fill="#3f7fc4"/><path d="M10.5 12V30M10.5 20.5H25M2 12H25" stroke="#8a7646" stroke-width="2"/><path d="M12 28C17 27 21 24 23 19" fill="none" stroke="#f1d08a" stroke-width="2" stroke-dasharray="2 2"/><path d="M22.5 2.5 L29.5 9.5 L22.5 16.5 L15.5 9.5Z" fill="#c9932a" stroke="#a87a1e" stroke-width="1.4"/><path d="M22.5 5.5V13.5M18.5 9.5H26.5" stroke="#fff" stroke-width="2.4"/></svg>
<div style="left:2028px;top:138px;width:2px;height:44px;background:#cdcdcd;"></div>
<div style="left:2034px;top:138px;width:44px;height:44px;background:#d3d3d3;border:1.5px solid #bcbcbc;"></div>
<svg style="left:2040px;top:143px;" width="34" height="34" viewBox="0 0 34 34"><rect x="15" y="0.5" width="16.5" height="14.5" fill="#b4cfdc" opacity=".7"/><path d="M1.5 18H7.5V24H1.5Z M7.5 24.5V30.5H18V24.5 M12.5 24.5V14H23.5V24.5H7.5" fill="none" stroke="#62a9d1" stroke-width="1.8"/></svg>
<span class="t" style="left:2054.60px;top:142px;font:700 19px/1 'Liberation Sans', sans-serif;color:#2d6a9c;">M</span>
<svg style="left:121px;top:197px;" width="32" height="30" viewBox="0 0 32 30"><rect x="1" y="1" width="8" height="4" fill="#8fb4d9" stroke="#3f78b5" stroke-width="1.4"/><rect x="1" y="4" width="16" height="12" fill="#d8e6f4" stroke="#3f78b5" stroke-width="1.8"/><path d="M5 11H13L9 8Z" fill="#3f78b5"/><path d="M4 16V26H10" fill="none" stroke="#3f78b5" stroke-width="1.8"/><rect x="10" y="15" width="8" height="4" fill="#8fb4d9" stroke="#3f78b5" stroke-width="1.4"/><rect x="10" y="18" width="16" height="11" fill="#d8e6f4" stroke="#3f78b5" stroke-width="1.8"/><path d="M21 11H30M28 27H32" stroke="#3f78b5" stroke-width="1.8"/></svg>
<svg style="left:333.5px;top:201.8px;" width="21" height="21" viewBox="0 0 21 21"><path d="M1 1H5.2L10.5 6.3L15.8 1H20V5.2L14.7 10.5L20 15.8V20H15.8L10.5 14.7L5.2 20H1V15.8L6.3 10.5L1 5.2Z" fill="#fff" stroke="#111" stroke-width="2" stroke-linejoin="miter"/></svg>
<svg style="left:386px;top:200px;" width="27" height="28" viewBox="0 0 27 28"><rect x="1" y="1" width="19" height="19" fill="#dfe7f5" stroke="#8da2c7" stroke-width="1.6"/><rect x="5" y="6" width="20" height="20" fill="#fff" stroke="#7f97c2" stroke-width="2"/><rect x="6" y="7" width="18" height="18" fill="url(#gw)"/><path d="M9 16H21" stroke="#1f3f7f" stroke-width="2.2"/></svg>
<svg style="left:425px;top:196px;" width="34" height="33" viewBox="0 0 34 33"><path d="M10 1L1.5 9L10 17V12.5H23V5.5H10Z" fill="url(#gyel)" stroke="#b8761a" stroke-width="1.8" stroke-linejoin="round"/><path d="M24 15L32.5 23.5L24 32V27.5H11V19.5H24Z" fill="url(#gyel)" stroke="#b8761a" stroke-width="1.8" stroke-linejoin="round"/></svg>
<svg style="left:480.5px;top:198px;" width="12" height="30" viewBox="0 0 12 30"><circle cx="6" cy="5" r="3.9" fill="#fff" stroke="#222" stroke-width="1.6"/><circle cx="6" cy="15" r="3.9" fill="#fff" stroke="#222" stroke-width="1.6"/><circle cx="6" cy="25" r="3.9" fill="#fff" stroke="#222" stroke-width="1.6"/></svg>
<svg style="left:520px;top:200px;" width="20" height="8" viewBox="0 0 20 8"><rect x="1" y="1" width="18" height="6" fill="#fff" stroke="#4e4e4e" stroke-width="2"/></svg>
<svg style="left:564px;top:200px;" width="20" height="20" viewBox="0 0 20 20"><rect x="1" y="1" width="18" height="18" fill="#fff" stroke="#4e4e4e" stroke-width="2"/><path d="M1 4.4H19" stroke="#4e4e4e" stroke-width="1.5"/></svg>
<svg style="left:560px;top:252.5px;" width="22" height="22" viewBox="0 0 22 22"><circle cx="11" cy="11" r="10.5" fill="#1e1e1e"/><path d="M6.8 6.8L15.2 15.2M15.2 6.8L6.8 15.2" stroke="#fff" stroke-width="2.2"/></svg>
<svg style="left:121px;top:888px;" width="28" height="30" viewBox="0 0 28 30"><rect x="1" y="1" width="10" height="10" fill="#dbe9f7" stroke="#2f7fc8" stroke-width="2"/><rect x="1" y="18" width="10" height="10" fill="#dbe9f7" stroke="#2f7fc8" stroke-width="2"/><rect x="15" y="11" width="5" height="5" fill="#fff" stroke="#2f7fc8" stroke-width="1.6"/><path d="M15 6H27M22 13.5H27M15 24H27" stroke="#2f7fc8" stroke-width="2"/></svg>
<svg style="left:251.7px;top:891.8px;" width="20.5" height="20.5" viewBox="0 0 21 21"><path d="M1 1H5.2L10.5 6.3L15.8 1H20V5.2L14.7 10.5L20 15.8V20H15.8L10.5 14.7L5.2 20H1V15.8L6.3 10.5L1 5.2Z" fill="#fff" stroke="#111" stroke-width="2" stroke-linejoin="miter"/></svg>
<svg style="left:433px;top:891px;" width="20" height="24" viewBox="0 0 20 24"><path d="M4 7V20H14M4 12H14" fill="none" stroke="#23236a" stroke-width="1.6"/><path d="M9 4H19" stroke="#7a7a8a" stroke-width="1.6"/><rect x="1.7" y="1.7" width="4.6" height="4.6" fill="#fff" stroke="#23238a" stroke-width="1.5"/><rect x="14" y="9.7" width="4.6" height="4.6" fill="#fff" stroke="#23238a" stroke-width="1.5"/><rect x="14" y="17.7" width="4.6" height="4.6" fill="#fff" stroke="#23238a" stroke-width="1.5"/></svg>
<div style="left:464.5px;top:880.3px;width:43px;height:43.4px;background:#d4d4d4;border:1.6px solid #b4b4b4;"></div>
<svg style="left:469px;top:884px;" width="36" height="36" viewBox="0 0 36 36"><path d="M1 14.5L21 2H32.5V13L22 34H1Z" fill="#dcd8b4" stroke="#c4be98" stroke-width="1"/><rect x="1" y="14.5" width="20" height="19" fill="#c4c4c4" stroke="#a4a4a4" stroke-width="1.4"/><path d="M2 19.5H20M2 24H20M2 28.5H20" stroke="#a8a8a8" stroke-width="1.3"/><path d="M7.5 15V33" stroke="#a8a8a8" stroke-width="1.3"/><rect x="21.7" y="2.7" width="10.6" height="10.2" fill="#f5e328" stroke="#6a6a62" stroke-width="1.5"/><path d="M21.5 4.5H32.5" stroke="#6a6a62" stroke-width="2.6"/><path d="M27 6V13" stroke="#6a6a62" stroke-width="1.4"/></svg>
<svg style="left:520px;top:890px;" width="20" height="8" viewBox="0 0 20 8"><rect x="1" y="1" width="18" height="6" fill="#fff" stroke="#4e4e4e" stroke-width="2"/></svg>
<svg style="left:564px;top:890px;" width="20" height="20" viewBox="0 0 20 20"><rect x="1" y="1" width="18" height="18" fill="#fff" stroke="#4e4e4e" stroke-width="2"/><path d="M1 4.4H19" stroke="#4e4e4e" stroke-width="1.5"/></svg>
<svg style="left:124px;top:304px;" width="18" height="10" viewBox="0 0 18 10"><path d="M1.5 1L9 8.5L16.5 1" fill="none" stroke="#7b7b7b" stroke-width="2.6"/></svg>
<svg style="left:156.5px;top:338px;" width="18" height="10" viewBox="0 0 18 10"><path d="M1.5 1L9 8.5L16.5 1" fill="none" stroke="#7b7b7b" stroke-width="2.6"/></svg>
<svg style="left:194px;top:367px;" width="11" height="18" viewBox="0 0 11 18"><path d="M1.5 1.5L9 9L1.5 16.5" fill="none" stroke="#7b7b7b" stroke-width="2.6"/></svg>
<svg style="left:194px;top:401px;" width="11" height="18" viewBox="0 0 11 18"><path d="M1.5 1.5L9 9L1.5 16.5" fill="none" stroke="#7b7b7b" stroke-width="2.6"/></svg>
<svg style="left:161px;top:291px;" width="32" height="30" viewBox="0 0 32 30"><path d="M1 26V12H10L12 9H22V14" fill="#f8d98c" stroke="#c98a2a" stroke-width="1.4"/><path d="M2 27.5L8 16H30.5L24 27.5Z" fill="#8ec3f1" stroke="#1c2fa8" stroke-width="1.8" stroke-linejoin="round"/><path d="M1 13V27.5H3" fill="none" stroke="#1c2fa8" stroke-width="1.8"/><path d="M20 1V2.5C20 8.5 29.5 8.5 29.5 2.5V1M20 15V13.5C20 7.5 29.5 7.5 29.5 13.5V15" fill="none" stroke="#1f5fa8" stroke-width="1.8"/><path d="M18.5 1.2H21.5M28 1.2H31M18.5 14.8H21.5M28 14.8H31" stroke="#1f5fa8" stroke-width="1.6"/><path d="M13 6.5C15 5.5 16 7 15 9" fill="none" stroke="#d9952a" stroke-width="1.6"/></svg>
<span class="t" style="left:162.00px;top:292px;font:700 12px/1 'Liberation Sans', sans-serif;color:#1a5a96;">M</span>
<svg style="left:194px;top:332px;" width="31" height="22" viewBox="0 0 31 22"><g transform="translate(0,0) scale(1.0)"><path d="M1 20V3.5C1 2 2 1 3.5 1H9.5L12 4H21C22.5 4 23 5 23 6V9" fill="#f6d58f" stroke="#b7742a" stroke-width="1.7"/><path d="M1 20L6.5 9H29L23.5 20Z" fill="url(#gfold)" stroke="#b7742a" stroke-width="1.7" stroke-linejoin="round"/></g></svg>
<svg style="left:228px;top:360px;" width="25" height="31" viewBox="0 0 25 31"><path d="M1.2 1.2H16L23 8V29H1.2Z" fill="#eaf1fb" stroke="#9a8450" stroke-width="2"/><path d="M16 1.5V8H22.5Z" fill="#e7c777" stroke="#b89a55" stroke-width="1"/><rect x="10" y="11" width="9" height="7" fill="#fff" stroke="#4a98c0" stroke-width="1.8"/><rect x="9" y="18" width="8" height="6" fill="#fff" stroke="#4a98c0" stroke-width="1.8"/><rect x="5" y="15" width="4" height="4" fill="#fff" stroke="#4a98c0" stroke-width="1.6"/></svg>
<svg style="left:230px;top:396px;" width="23" height="29" viewBox="0 0 23 29"><g transform="translate(0,0)"><path d="M1 1H15L21 7V27H1Z" fill="#f1f5fb" stroke="#8a9bb5" stroke-width="1.6"/><path d="M15 1V7H21Z" fill="#e7c777" stroke="#b8a26a" stroke-width="1"/><path d="M4 7H12M4 11H17M4 15H17M4 19H17M4 23H13" stroke="#4a6fb3" stroke-width="2"/></g></svg>
<svg style="left:626px;top:197.5px;" width="23" height="29" viewBox="0 0 23 29"><g transform="translate(0,0)"><path d="M1 1H15L21 7V27H1Z" fill="#f1f5fb" stroke="#8a9bb5" stroke-width="1.6"/><path d="M15 1V7H21Z" fill="#e7c777" stroke="#b8a26a" stroke-width="1"/><path d="M4 7H12M4 11H17M4 15H17M4 19H17M4 23H13" stroke="#4a6fb3" stroke-width="2"/></g></svg>
<svg style="left:857.5px;top:201.5px;" width="23" height="23" viewBox="0 0 23 23"><g transform="translate(0,0)"><path d="M11 8V12M4.5 16V12H17.5V16" fill="none" stroke="#3f69b5" stroke-width="1.8"/><rect x="7" y="1" width="8.5" height="7" fill="#f7d58a" stroke="#c88a1e" stroke-width="1.6"/><rect x="1" y="15.5" width="8" height="6" fill="#b9cfee" stroke="#3f69b5" stroke-width="1.6"/><rect x="13" y="15.5" width="8.5" height="6" fill="#b4d53c" stroke="#2f8a3a" stroke-width="1.6"/></g></svg>
<svg style="left:1297.5px;top:201.5px;" width="23" height="23" viewBox="0 0 23 23"><g transform="translate(0,0)"><path d="M11 8V12M4.5 16V12H17.5V16" fill="none" stroke="#3f69b5" stroke-width="1.8"/><rect x="7" y="1" width="8.5" height="7" fill="#f7d58a" stroke="#c88a1e" stroke-width="1.6"/><rect x="1" y="15.5" width="8" height="6" fill="#b9cfee" stroke="#3f69b5" stroke-width="1.6"/><rect x="13" y="15.5" width="8.5" height="6" fill="#b4d53c" stroke="#2f8a3a" stroke-width="1.6"/></g></svg>
<svg style="left:1604px;top:202px;" width="20.4" height="20.4" viewBox="0 0 21 21"><path d="M1 1H5.2L10.5 6.3L15.8 1H20V5.2L14.7 10.5L20 15.8V20H15.8L10.5 14.7L5.2 20H1V15.8L6.3 10.5L1 5.2Z" fill="#fff" stroke="#111" stroke-width="2" stroke-linejoin="miter"/></svg>
<svg style="left:2002px;top:200px;" width="20" height="8" viewBox="0 0 20 8"><rect x="1" y="1" width="18" height="6" fill="#fff" stroke="#4e4e4e" stroke-width="2"/></svg>
<svg style="left:2046px;top:200px;" width="20" height="20" viewBox="0 0 20 20"><rect x="1" y="1" width="18" height="18" fill="#fff" stroke="#4e4e4e" stroke-width="2"/><path d="M1 4.4H19" stroke="#4e4e4e" stroke-width="1.5"/></svg>
<svg style="left:623px;top:245px;" width="34" height="32" viewBox="0 0 34 32"><rect x="1" y="11.5" width="11" height="11" rx="1" fill="#c2d58c" stroke="#93b56a" stroke-width="1.6"/><rect x="21" y="1.5" width="11" height="11" rx="1" fill="#b9d58c" stroke="#8fbf7c" stroke-width="1.6"/><rect x="21" y="19.5" width="11" height="11" rx="1" fill="#dfe9f7" stroke="#7f9fd0" stroke-width="1.6"/></svg>
<svg style="left:662.5px;top:260px;" width="10" height="7" viewBox="0 0 10 7"><path d="M0 0H10L5.0 7Z" fill="#000"/></svg>
<svg style="left:685px;top:245px;" width="30" height="33" viewBox="0 0 30 33"><rect x="1" y="1" width="9" height="9" fill="#fbe7a5" stroke="#c98f1e" stroke-width="1.6"/><path d="M3 11V28H9M3 16H9" fill="none" stroke="#000" stroke-width="1.6" stroke-dasharray="2 2"/><path d="M7 16H18M7 28H14" stroke="#000" stroke-width="2"/><path d="M8 13.5V18.5M8 25.5V30.5" stroke="#000" stroke-width="2.4"/><rect x="19" y="11" width="9.5" height="9.5" fill="#3a9a44" stroke="#2a7a34" stroke-width="1.4"/><rect x="15" y="22.5" width="9.5" height="9.5" fill="#4a86c8" stroke="#2b4da0" stroke-width="1.4"/></svg>
<svg style="left:722px;top:260px;" width="10" height="7" viewBox="0 0 10 7"><path d="M0 0H10L5.0 7Z" fill="#000"/></svg>
<svg style="left:743px;top:245px;" width="34" height="33" viewBox="0 0 34 33"><path d="M5 2H30M5 2V16M17 2V20M20 2V20M30 2V16" fill="none" stroke="#e02020" stroke-width="1.6" stroke-dasharray="2 2"/><path d="M8 3.5H15M21 3.5H28" stroke="#000" stroke-width="2.6"/><rect x="1.5" y="16.5" width="5.5" height="15" fill="#f9d97a" stroke="#c98f1e" stroke-width="1.4"/><rect x="15.5" y="20.5" width="5.5" height="10" fill="#4a6fc8" stroke="#2b3da0" stroke-width="1.4"/><rect x="29" y="16.5" width="4" height="10" fill="#3a9a44" stroke="#2a7a34" stroke-width="1.2"/></svg>
<svg style="left:782.5px;top:260px;" width="10" height="7" viewBox="0 0 10 7"><path d="M0 0H10L5.0 7Z" fill="#000"/></svg>
<svg style="left:803px;top:247px;" width="34" height="30" viewBox="0 0 34 30"><path d="M11 5H24" stroke="#e02020" stroke-width="1.8" stroke-dasharray="2 2"/><path d="M11 4L24 18" stroke="#000" stroke-width="2"/><rect x="1.5" y="1.5" width="8.5" height="27" fill="#fbe38a" stroke="#c98f1e" stroke-width="1.8"/><rect x="23.5" y="1.5" width="9" height="23" fill="#4cc860" stroke="#2a8a3a" stroke-width="1.8"/></svg>
<svg style="left:842px;top:260px;" width="10" height="7" viewBox="0 0 10 7"><path d="M0 0H10L5.0 7Z" fill="#000"/></svg>
<div style="left:864px;top:241px;width:2px;height:43px;background:#cfcfcf;"></div>
<svg style="left:879px;top:249px;" width="30" height="28" viewBox="0 0 30 28"><g transform="translate(0,0)"><rect x="1" y="9" width="22" height="17" fill="#e9f2fb" stroke="#8fa0c0" stroke-width="1.8"/><path d="M11 16L21 25" stroke="#bcd0e8" stroke-width="1.4"/><path d="M17 9L12 15" stroke="#1d3a2a" stroke-width="1.6"/><path d="M14.5 7L19 12L28 5.5L22 0Z" fill="#3c9a44" stroke="#1f6e2c" stroke-width="1"/><path d="M17 7.5L24 2.5M19.5 9.5L26.5 4.5" stroke="#7fd083" stroke-width="1.2"/></g></svg>
<svg style="left:922px;top:249px;" width="32" height="28" viewBox="0 0 32 28"><g opacity=".38"><g transform="translate(3,0)"><rect x="1" y="9" width="22" height="17" fill="#e9f2fb" stroke="#8fa0c0" stroke-width="1.8"/><path d="M11 16L21 25" stroke="#bcd0e8" stroke-width="1.4"/><path d="M17 9L12 15" stroke="#1d3a2a" stroke-width="1.6"/><path d="M14.5 7L19 12L28 5.5L22 0Z" fill="#3c9a44" stroke="#1f6e2c" stroke-width="1"/><path d="M17 7.5L24 2.5M19.5 9.5L26.5 4.5" stroke="#7fd083" stroke-width="1.2"/></g><path d="M1 3L8 10M8 3L1 10" stroke="#666" stroke-width="2.4"/></g></svg>
<div style="left:964px;top:241px;width:2px;height:43px;background:#cfcfcf;"></div>
<svg style="left:981.5px;top:251.5px;" width="23" height="23" viewBox="0 0 23 23"><g transform="translate(0,0)"><path d="M11 8V12M4.5 16V12H17.5V16" fill="none" stroke="#3f69b5" stroke-width="1.8"/><rect x="7" y="1" width="8.5" height="7" fill="#f7d58a" stroke="#c88a1e" stroke-width="1.6"/><rect x="1" y="15.5" width="8" height="6" fill="#b9cfee" stroke="#3f69b5" stroke-width="1.6"/><rect x="13" y="15.5" width="8.5" height="6" fill="#b4d53c" stroke="#2f8a3a" stroke-width="1.6"/></g></svg>
<svg style="left:1014.5px;top:260px;" width="10" height="7" viewBox="0 0 10 7"><path d="M0 0H10L5.0 7Z" fill="#000"/></svg>
<div style="left:1036px;top:241px;width:2px;height:43px;background:#cfcfcf;"></div>
<svg style="left:1049px;top:247px;" width="32" height="32" viewBox="0 0 32 32"><path d="M1 1H14L20 7V27H1Z" fill="#e8edf6" stroke="#a8a089" stroke-width="1.6"/><path d="M10 5H24L30.5 11.5V31H10Z" fill="#eef2fa" stroke="#b4a57a" stroke-width="1.8"/><path d="M24 5V11.5H30.5Z" fill="#e7c777"/><path d="M4 9V20H8M4 14H8" fill="none" stroke="#4a6fb3" stroke-width="1.6"/><path d="M14 13H21M14 17V26H18M22 19H27V23H20V26" fill="none" stroke="#3a5fa8" stroke-width="1.8"/></svg>
<div style="left:1092px;top:241px;width:2px;height:43px;background:#cfcfcf;"></div>
<svg style="left:1111px;top:252.8px;" width="18" height="18" viewBox="0 0 18 18"><circle cx="9" cy="9" r="7.6" fill="#a9d3b3" stroke="#bfe0c6" stroke-width="1.4"/></svg>
<svg style="left:1150px;top:249px;" width="30" height="27" viewBox="0 0 30 27"><circle cx="15" cy="14" r="8.4" fill="#fff"/><circle cx="15" cy="14" r="6.4" fill="#4f93bb" stroke="#3a78a8" stroke-width="1"/><path d="M2 1L27.7 24.7" stroke="#141f72" stroke-width="2.2"/></svg>
<svg style="left:1199px;top:249px;" width="18" height="18" viewBox="0 0 18 18"><circle cx="8.9" cy="9" r="7.6" fill="#a9d3b3" stroke="#bfe0c6" stroke-width="1.4"/></svg>
<span class="t" style="left:1192.00px;top:267px;font:700 13.5px/1 'Liberation Sans', sans-serif;color:#9ccaad;transform:scaleX(0.7151);transform-origin:0 0;">LABEL</span>
<svg style="left:1239px;top:245px;" width="30" height="29" viewBox="0 0 30 29"><circle cx="14.3" cy="13.8" r="8.2" fill="#fff"/><circle cx="14.3" cy="13.8" r="6.4" fill="#4f93bb" stroke="#3a78a8" stroke-width="1"/><path d="M1 1L28.5 28" stroke="#141f72" stroke-width="2.2"/></svg>
<span class="t" style="left:1235.70px;top:267px;font:700 13.5px/1 'Liberation Sans', sans-serif;color:#0a1268;transform:scaleX(0.7263);transform-origin:0 0;">LABEL</span>
<svg style="left:1284px;top:249.7px;" width="26" height="25" viewBox="0 0 26 25"><path d="M5 2.5L12.5 8.5L20 2.5L23 5.5L17 12.2L23 19L20 22L12.5 16L5 22L2 19L8 12.2L2 5.5Z" fill="#f0a9b1" stroke="#f0a9b1" stroke-width="3.4" stroke-linejoin="round"/><path d="M5 2.5L12.5 8.5L20 2.5L23 5.5L17 12.2L23 19L20 22L12.5 16L5 22L2 19L8 12.2L2 5.5Z" fill="none" stroke="#f6cdd1" stroke-width="1" stroke-linejoin="round" transform="translate(12.5 12.2) scale(1.16) translate(-12.5 -12.2)"/></svg>
<svg style="left:1325px;top:245px;" width="32" height="34" viewBox="0 0 32 34"><g transform="translate(0.5,0) scale(.94 .78)"><path d="M5 2.5L12.5 8.5L20 2.5L23 5.5L17 12.2L23 19L20 22L12.5 16L5 22L2 19L8 12.2L2 5.5Z" fill="#f9c4cb" stroke="#ee4a5c" stroke-width="3.2" stroke-linejoin="round" stroke-dasharray="2.2 1.2"/></g><g transform="translate(8.5,10.5) scale(.9)"><path d="M5 2.5L12.5 8.5L20 2.5L23 5.5L17 12.2L23 19L20 22L12.5 16L5 22L2 19L8 12.2L2 5.5Z" fill="#e8283c" stroke="#e8283c" stroke-width="3.4" stroke-linejoin="round"/><path d="M6 6L19 19M19 6L6 19" stroke="#c4142a" stroke-width="1.4" stroke-dasharray="1.5 1.5"/></g></svg>
<div style="left:1368px;top:241px;width:2px;height:43px;background:#cfcfcf;"></div>
<div style="left:1374px;top:241px;width:44px;height:43px;background:#cfcfcf;border:1px solid #b5b5b5;"></div>
<span class="t" style="left:1387.50px;top:246px;font:700 32px/1 'Liberation Serif', serif;color:#23589a;">B</span>
<span class="t" style="left:1432.50px;top:246px;font:italic 700 32px/1 'Liberation Serif', serif;color:#23589a;">I</span>
<span class="t" style="left:1472.00px;top:246px;font:400 33px/1 'Liberation Serif', serif;color:#23589a;">A</span>
<svg style="left:1506.5px;top:260px;" width="10" height="7" viewBox="0 0 10 7"><path d="M0 0H10L5.0 7Z" fill="#000"/></svg>
<div style="left:1532px;top:256.5px;width:24px;height:19.5px;background:#f4f8fc;border:2px solid #8ea4c8;border-top:5px solid #5b9bd8;border-bottom:2px solid #c8b070;"></div>
<span class="t" style="left:1534.50px;top:250px;font:400 27px/1 'Liberation Serif', serif;color:#23589a;">A</span>
<div style="left:1572px;top:241px;width:2px;height:43px;background:#cfcfcf;"></div>
<svg style="left:1587px;top:249px;" width="29" height="28" viewBox="0 0 29 28"><path d="M9 3C9 0 15 0 15 3V9" fill="none" stroke="#555" stroke-width="1.8"/><path d="M2 14L13 4L23 13L12 25Z" fill="#e6eaf2" stroke="#5a6272" stroke-width="1.6"/><path d="M8 14L13 9L19 14L12 21Z" fill="#fff"/><path d="M21 11C26 12 28 18 26 25C24 21 22 18 18 17Z" fill="#3b6fc0" stroke="#2b4f9a" stroke-width="1"/></svg>
<svg style="left:1622.3px;top:260px;" width="10" height="7" viewBox="0 0 10 7"><path d="M0 0H10L5.0 7Z" fill="#000"/></svg>
<svg style="left:1643px;top:251px;" width="34" height="25" viewBox="0 0 34 25"><rect x="1" y="19" width="8" height="3.6" fill="#3b63b0"/><path d="M12 22L15 16L27 2L32 3L30 8L19 21Z" fill="#5b7fc8" stroke="#3a5aa0" stroke-width="1"/><path d="M17 15L28 3" stroke="#c4d2ee" stroke-width="2"/></svg>
<svg style="left:1682px;top:260px;" width="10" height="7" viewBox="0 0 10 7"><path d="M0 0H10L5.0 7Z" fill="#000"/></svg>
<svg style="left:1707px;top:252px;" width="29" height="18" viewBox="0 0 29 18"><path d="M1 9H26M19 3L26.5 9L19 15" fill="none" stroke="#3b63b0" stroke-width="2"/></svg>
<svg style="left:1741.7px;top:260px;" width="10" height="7" viewBox="0 0 10 7"><path d="M0 0H10L5.0 7Z" fill="#000"/></svg>
<svg style="left:1765px;top:248px;" width="30" height="29" viewBox="0 0 30 29"><rect x="1" y="1" width="28" height="27" fill="#dfe9f5" stroke="#8a94b0" stroke-width="2"/><rect x="3" y="3" width="24" height="23" fill="#5a9bd8"/><path d="M3 19L10 13L17 20L22 16L27 19V26H3Z" fill="#e9eef4"/><path d="M9 5L14 8L16 14L20 22L15 24L11 18L8 11Z" fill="#c8323a"/><path d="M12 8L18 16" stroke="#7a2a1a" stroke-width="2"/><rect x="20" y="14" width="6" height="11" fill="#8a9ab0"/></svg>
<svg style="left:1838px;top:248px;" width="30" height="31" viewBox="0 0 30 31"><circle cx="15" cy="15" r="14" fill="url(#gpal)" stroke="#b4c6dc" stroke-width="1.4"/><ellipse cx="15" cy="27" rx="8" ry="2" fill="#9fb4d0" opacity=".5"/><circle cx="11" cy="8.5" r="3.4" fill="#f0a020"/><circle cx="10.4" cy="7.9" r="0.9" fill="#fff" opacity=".55"/><circle cx="19.5" cy="8.5" r="3.4" fill="#78c030"/><circle cx="18.9" cy="7.9" r="0.9" fill="#fff" opacity=".55"/><circle cx="23.5" cy="15.5" r="3.4" fill="#28a838"/><circle cx="22.9" cy="14.9" r="0.9" fill="#fff" opacity=".55"/><circle cx="19.5" cy="23" r="3.4" fill="#2870d8"/><circle cx="18.9" cy="22.4" r="0.9" fill="#fff" opacity=".55"/><circle cx="11" cy="23" r="3.4" fill="#d82838"/><circle cx="10.4" cy="22.4" r="0.9" fill="#fff" opacity=".55"/><circle cx="7" cy="15.5" r="3.4" fill="#f07818"/><circle cx="6.4" cy="14.9" r="0.9" fill="#fff" opacity=".55"/></svg>
<svg style="left:2048px;top:253px;" width="16" height="24" viewBox="0 0 16 24"><path d="M2 2L14 12L2 22Z" fill="#fff" stroke="#111" stroke-width="2.2" stroke-linejoin="miter"/></svg>
<svg style="left:1844px;top:295px;" width="24" height="34" viewBox="0 0 24 34"><path d="M2 1.5L2 25L8 20L12.5 31L17 29L12.5 18.5L20.5 18.5Z" fill="#f6f2b8" stroke="#5a5a4a" stroke-width="1.6" stroke-linejoin="round"/></svg>
<svg style="left:1877px;top:295px;" width="30" height="30" viewBox="0 0 30 30"><path d="M19 19L26.5 26.5" stroke="#8a5a3a" stroke-width="3" stroke-linecap="round"/><circle cx="12" cy="12" r="10" fill="#f4f7fb" stroke="#b0a688" stroke-width="2"/><path d="M6.5 12H17.5M12 6.5V17.5" stroke="#2b4fc0" stroke-width="3"/></svg>
<svg style="left:1915px;top:295px;" width="30" height="30" viewBox="0 0 30 30"><path d="M19 19L26.5 26.5" stroke="#8a5a3a" stroke-width="3" stroke-linecap="round"/><circle cx="12" cy="12" r="10" fill="#f4f7fb" stroke="#b0a688" stroke-width="2"/><path d="M6.5 12H17.5" stroke="#2b4fc0" stroke-width="3"/></svg>
<svg style="left:1951.5px;top:300px;" width="31" height="22" viewBox="0 0 31 22"><path d="M1 1H30V15L24 21H1Z" fill="url(#gnote)" stroke="#c9ad4a" stroke-width="1.8"/><path d="M30 15H24V21Z" fill="#c49a2a"/></svg>
<svg style="left:1991.5px;top:308px;" width="10" height="6" viewBox="0 0 10 6"><path d="M0 0H10L5.0 6Z" fill="#000"/></svg>
<svg style="left:2008px;top:292px;" width="36" height="34" viewBox="0 0 36 34"><path d="M2 2L32 31" stroke="#c9cbe0" stroke-width="5"/><path d="M2 2L32 31" stroke="#1b2a82" stroke-width="2.4"/><path d="M25 2.5L26.82 7.18L31.5 9L26.82 10.82L25 15.5L23.18 10.82L18.5 9L23.18 7.18Z" fill="#f9e9b0" stroke="#c8922a" stroke-width="1.2" stroke-linejoin="round"/><circle cx="25" cy="9" r="2.08" fill="#fff"/></svg>
<svg style="left:1839px;top:335px;" width="30" height="28" viewBox="0 0 30 28"><g transform="translate(0,0)"><rect x="1" y="9" width="22" height="17" fill="#e9f2fb" stroke="#8fa0c0" stroke-width="1.8"/><path d="M11 16L21 25" stroke="#bcd0e8" stroke-width="1.4"/><path d="M17 9L12 15" stroke="#1d3a2a" stroke-width="1.6"/><path d="M14.5 7L19 12L28 5.5L22 0Z" fill="#3c9a44" stroke="#1f6e2c" stroke-width="1"/><path d="M17 7.5L24 2.5M19.5 9.5L26.5 4.5" stroke="#7fd083" stroke-width="1.2"/></g></svg>
<svg style="left:1877.5px;top:346px;" width="10" height="6" viewBox="0 0 10 6"><path d="M0 0H10L5.0 6Z" fill="#000"/></svg>
<svg style="left:1835px;top:386px;" width="31" height="22" viewBox="0 0 31 22"><g transform="translate(0,0) scale(1.0)"><path d="M1 20V3.5C1 2 2 1 3.5 1H9.5L12 4H21C22.5 4 23 5 23 6V9" fill="#f6d58f" stroke="#b7742a" stroke-width="1.7"/><path d="M1 20L6.5 9H29L23.5 20Z" fill="url(#gfold)" stroke="#b7742a" stroke-width="1.7" stroke-linejoin="round"/></g></svg>
<svg style="left:2053px;top:390.5px;" width="22" height="13" viewBox="0 0 22 13"><path d="M1 6.5L6 2V11Z" fill="#fff" stroke="#8a8a8a" stroke-width="1.3"/><path d="M8 3.5C10 1 13 1 14.5 3.5C16 1 19.5 1 20.5 4V9C19.5 12 16 12 14.5 9.5C13 12 10 12 8 9.5Z" fill="#fff" stroke="#8a8a8a" stroke-width="1.3"/></svg>
<svg style="left:1835px;top:531px;" width="31" height="22" viewBox="0 0 31 22"><g transform="translate(0,0) scale(1.0)"><path d="M1 20V3.5C1 2 2 1 3.5 1H9.5L12 4H21C22.5 4 23 5 23 6V9" fill="#f6d58f" stroke="#b7742a" stroke-width="1.7"/><path d="M1 20L6.5 9H29L23.5 20Z" fill="url(#gfold)" stroke="#b7742a" stroke-width="1.7" stroke-linejoin="round"/></g></svg>
<svg style="left:2053px;top:535.5px;" width="22" height="13" viewBox="0 0 22 13"><path d="M1 6.5L6 2V11Z" fill="#fff" stroke="#8a8a8a" stroke-width="1.3"/><path d="M8 3.5C10 1 13 1 14.5 3.5C16 1 19.5 1 20.5 4V9C19.5 12 16 12 14.5 9.5C13 12 10 12 8 9.5Z" fill="#fff" stroke="#8a8a8a" stroke-width="1.3"/></svg>
<svg style="left:1866px;top:430px;" width="26" height="26" viewBox="0 0 26 26"><path d="M13 1L16.36 9.64L25 13L16.36 16.36L13 25L9.64 16.36L1 13L9.64 9.64Z" fill="#9a9a9a" stroke="#555" stroke-width="1.2" stroke-linejoin="round"/><circle cx="13" cy="13" r="3.84" fill="#cfcfcf"/></svg>
<svg style="left:1866px;top:476px;" width="26" height="26" viewBox="0 0 26 26"><path d="M13 1L16.36 9.64L25 13L16.36 16.36L13 25L9.64 16.36L1 13L9.64 9.64Z" fill="#b4b4d8" stroke="#6a6ab8" stroke-width="1.2" stroke-linejoin="round"/><circle cx="13" cy="13" r="3.84" fill="#d8d8e8"/></svg>
<svg style="left:1860px;top:569px;" width="34" height="33" viewBox="0 0 34 33"><path d="M2 2L31 31" stroke="#c9cbe0" stroke-width="5"/><path d="M2 2L31 31" stroke="#1b2a82" stroke-width="2.4"/></svg>
<svg style="left:1860px;top:613px;" width="34" height="33" viewBox="0 0 34 33"><path d="M2 2L31 31" stroke="#c9cbe0" stroke-width="5"/><path d="M2 2L31 31" stroke="#1b2a82" stroke-width="2.4"/></svg>
<svg style="left:1860px;top:657px;" width="34" height="33" viewBox="0 0 34 33"><path d="M2 2L31 31" stroke="#c9cbe0" stroke-width="5"/><path d="M2 2L31 31" stroke="#1b2a82" stroke-width="2.4"/></svg>
<svg style="left:1860px;top:701px;" width="34" height="33" viewBox="0 0 34 33"><path d="M2 2L31 31" stroke="#c9cbe0" stroke-width="5"/><path d="M2 2L31 31" stroke="#1b2a82" stroke-width="2.4"/></svg>
<svg style="left:622px;top:1042px;" width="29" height="27" viewBox="0 0 29 27"><rect x="1" y="1" width="27" height="25" fill="#f4f6fa" stroke="#5d6f8f" stroke-width="2"/><rect x="1" y="1" width="27" height="5.5" fill="#5d6f8f"/><path d="M2 11H27M2 15.5H27M2 20H27" stroke="#b4bdd0" stroke-width="1.6"/><path d="M9 7V25" stroke="#9aa6bf" stroke-width="1.4"/></svg>
<svg style="left:785.3px;top:1045.6px;" width="21" height="21" viewBox="0 0 21 21"><path d="M1 1H5.2L10.5 6.3L15.8 1H20V5.2L14.7 10.5L20 15.8V20H15.8L10.5 14.7L5.2 20H1V15.8L6.3 10.5L1 5.2Z" fill="#fff" stroke="#111" stroke-width="2" stroke-linejoin="miter"/></svg>
<svg style="left:830px;top:1040px;" width="30" height="30" viewBox="0 0 30 30"><path d="M1 1H24C27 6 22 12 24 17C26 22 28 26 28 29H1Z" fill="#d4e6f7" stroke="#8a9ab8" stroke-width="1.6"/><path d="M1 1V29" stroke="#a08a4a" stroke-width="2"/><path d="M1 15H25M16 1V29" stroke="#fff" stroke-width="1.8"/><circle cx="8.5" cy="8" r="5.5" fill="#e01c24" stroke="#a00f18" stroke-width="1"/><path d="M8.5 17.5L14 23V28H3V23Z" fill="#f5a623" stroke="#c87a10" stroke-width="1.2"/><path d="M8.5 21L11 24V27H6V24Z" fill="#fde08a"/></svg>
<svg style="left:1908px;top:1041px;" width="34" height="30" viewBox="0 0 34 30"><rect x="1" y="7" width="25" height="21" fill="#eaf4fb" stroke="#8f7d4f" stroke-width="2"/><rect x="1" y="7" width="25" height="5" fill="#3f7fc4"/><rect x="2" y="12" width="23" height="15" fill="url(#gw)"/><g transform="translate(15,0) scale(1.2)"><path d="M6.5 7.5L1 13" stroke="#222" stroke-width="1.8"/><path d="M4 5L9 10L14 5.5L8.5 0Z" fill="#2f9a3d" stroke="#1c6b28" stroke-width="1"/><ellipse cx="10.8" cy="3" rx="4.2" ry="2.6" transform="rotate(45 10.8 3)" fill="#55c060" stroke="#1c6b28" stroke-width=".8"/></g></svg>
<svg style="left:1962.5px;top:1041.5px;" width="12" height="30" viewBox="0 0 12 30"><circle cx="6" cy="5" r="3.9" fill="#fff" stroke="#222" stroke-width="1.6"/><circle cx="6" cy="15" r="3.9" fill="#fff" stroke="#222" stroke-width="1.6"/><circle cx="6" cy="25" r="3.9" fill="#fff" stroke="#222" stroke-width="1.6"/></svg>
<svg style="left:2002px;top:1044px;" width="20" height="8" viewBox="0 0 20 8"><rect x="1" y="1" width="18" height="6" fill="#fff" stroke="#4e4e4e" stroke-width="2"/></svg>
<svg style="left:2046px;top:1044px;" width="20" height="20" viewBox="0 0 20 20"><rect x="1" y="1" width="18" height="18" fill="#fff" stroke="#4e4e4e" stroke-width="2"/><path d="M1 4.4H19" stroke="#4e4e4e" stroke-width="1.5"/></svg>
<svg style="left:634px;top:1100px;" width="26" height="26" viewBox="0 0 26 26"><path d="M13 1.6999999999999993L16.164 9.835999999999999L24.3 13L16.164 16.164L13 24.3L9.835999999999999 16.164L1.6999999999999993 13L9.835999999999999 9.835999999999999Z" fill="#8a8a8a" stroke="#4a4a4a" stroke-width="1.2" stroke-linejoin="round"/><circle cx="13" cy="13" r="3.616" fill="#d0d0d0"/></svg>
<svg style="left:1516px;top:1571px;" width="4" height="36" viewBox="0 0 4 36"><rect x="0" y="0" width="4" height="4" fill="#8f8a7c"/><rect x="0" y="0" width="2" height="2" fill="#c9c6bd"/><rect x="0" y="9" width="4" height="4" fill="#8f8a7c"/><rect x="0" y="9" width="2" height="2" fill="#c9c6bd"/><rect x="0" y="18" width="4" height="4" fill="#8f8a7c"/><rect x="0" y="18" width="2" height="2" fill="#c9c6bd"/><rect x="0" y="27" width="4" height="4" fill="#8f8a7c"/><rect x="0" y="27" width="2" height="2" fill="#c9c6bd"/></svg>
</body></html>
